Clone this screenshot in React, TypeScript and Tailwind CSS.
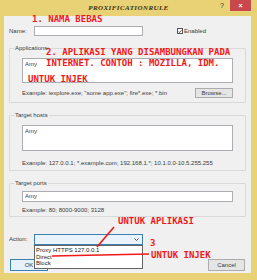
import {ReactNode} from "react";

const ui = "font-['Liberation_Sans',Arial,sans-serif] text-[6px] text-[#3a3a3a]";

function Group({label, children, className}: {label: string, children: ReactNode, className?: string})
{
    return <fieldset className={`border border-[#d9d9d9] rounded-[1px] mx-[5px] px-[12px] ${className ?? ""}`}>
        <legend className="ml-[-8px] px-[1px] leading-[7px] text-[6px] text-[#3a3a3a]">{label}</legend>
        {children}
    </fieldset>;
}

function Note({children, className}: {children: ReactNode, className: string})
{
    return <span className={`absolute whitespace-nowrap font-['DejaVu_Sans_Mono',monospace] font-bold text-[9px] leading-[9px] text-[#f21818] ${className}`}>
        {children}
    </span>;
}

export default function App()
{
    return <div className={`relative w-[257px] h-[280px] bg-[#e9d176] flex flex-col ${ui}`}>
        {/* title bar */}
        <div className="h-[16px] flex items-start relative">
            <div className="flex-1 text-center pt-[3px] font-['Liberation_Serif',serif] italic font-bold text-[7px] tracking-[0.4px] text-[#3a320c]">
                PROXIFICATIONRULE
            </div>
            <span className="absolute left-[220px] top-[1px] text-[7px] text-[#333]">?</span>
            <div className="absolute left-[230px] top-0 w-[21px] h-[11px] bg-[#c9484b] flex items-center justify-center text-white text-[7px] font-bold leading-none">
                ×
            </div>
        </div>

        {/* client area */}
        <div className="ml-[4px] mr-[6px] h-[257px] bg-[#f0f0f0] flex flex-col">
            <div className="mt-[10px] h-[10px] flex items-center px-[5px]">
                <span className="w-[25px]">Name:</span>
                <div className="w-[109px] h-[10px] bg-white border border-[#abadb3]"/>
                <div className="ml-[34px] flex items-center gap-[1px]">
                    <div className="w-[6px] h-[6px] border border-[#555] bg-white flex items-center justify-center">
                        <svg width="5" height="5" viewBox="0 0 5 5"><path d="M0.7 2.6 L2 3.8 L4.3 1" stroke="#222" strokeWidth="0.9" fill="none"/></svg>
                    </div>
                    <span>Enabled</span>
                </div>
            </div>

            <Group label="Applications:" className="mt-[9px] pb-[4px]">
                <div className="mt-[6px] h-[25px] bg-white border border-[#abadb3] px-[2px] pt-[1px]">Amy</div>
                <div className="mt-[5px] h-[10px] flex items-center justify-between">
                    <span>Example: iexplore.exe; "some app.exe"; fire*.exe; *.bin</span>
                    <div className="w-[38px] h-[10px] border border-[#acacac] bg-[#e5e5e5] flex items-center justify-center">Browse...</div>
                </div>
            </Group>

            <Group label="Target hosts" className="mt-[9px] pb-[3px]">
                <div className="mt-[6px] h-[26px] bg-white border border-[#abadb3] px-[2px] pt-[1px]">Amy</div>
                <div className="mt-[8px] leading-[8px] whitespace-nowrap">Example: 127.0.0.1; *.example.com; 192.168.1.*; 10.1.0.0-10.5.255.255</div>
            </Group>

            <Group label="Target ports" className="mt-[9px] pb-[2px]">
                <div className="mt-[4px] h-[11px] bg-white border border-[#abadb3] px-[2px] flex items-center">Amy</div>
                <div className="mt-[4px] leading-[8px]">Example: 80; 8000-9000; 3128</div>
            </Group>

            <div className="mt-[17px] h-[11px] flex items-center px-[5px]">
                <span className="w-[25px]">Action:</span>
                <div className="relative w-[109px] h-[11px] border border-[#3c7fb1] bg-[#eaf3fb] flex items-center justify-end pr-[3px]">
                    <svg width="5" height="3" viewBox="0 0 5 3"><path d="M0.5 0.5 L2.5 2.5 L4.5 0.5" stroke="#333" strokeWidth="0.8" fill="none"/></svg>
                    <div className="absolute left-[-1px] top-[10px] w-[109px] bg-white border border-[#646464] z-10 flex flex-col py-[1px] leading-[6.5px] text-[#222]">
                        <span className="px-[1px]">Proxy HTTPS 127.0.0.1</span>
                        <span className="px-[1px]">Direct</span>
                        <span className="px-[1px]">Block</span>
                    </div>
                </div>
            </div>

            <div className="mt-[14px] h-[12px] flex items-center justify-between pl-[6px] pr-[6px]">
                <div className="w-[38px] h-[12px] border border-[#3c7fb1] bg-[#e5f1fb] flex items-center justify-center">OK</div>
                <div className="w-[37px] h-[12px] border border-[#acacac] bg-[#e5e5e5] flex items-center justify-center">Cancel</div>
            </div>
        </div>

        {/* red annotations */}
        <svg className="absolute left-0 top-0 z-20 pointer-events-none" width="257" height="280">
            <path d="M97 247 L114 227" stroke="#f21818" strokeWidth="1.6"/>
            <path d="M52 256 L149 254" stroke="#f21818" strokeWidth="1.6"/>
        </svg>
        <Note className="z-20 left-[32px] top-[15px]">1. NAMA BEBAS</Note>
        <Note className="z-20 left-[46px] top-[48px]">2. APLIKASI YANG DISAMBUNGKAN PADA</Note>
        <Note className="z-20 left-[46px] top-[59px]">INTERNET. CONTOH : MOZILLA, IDM.</Note>
        <Note className="z-20 left-[28px] top-[75px]">UNTUK INJEK</Note>
        <Note className="z-20 left-[118px] top-[217px]">UNTUK APLIKASI</Note>
        <Note className="z-20 left-[150px] top-[239px]">3</Note>
        <Note className="z-20 left-[151px] top-[251px]">UNTUK INJEK</Note>
    </div>;
}
